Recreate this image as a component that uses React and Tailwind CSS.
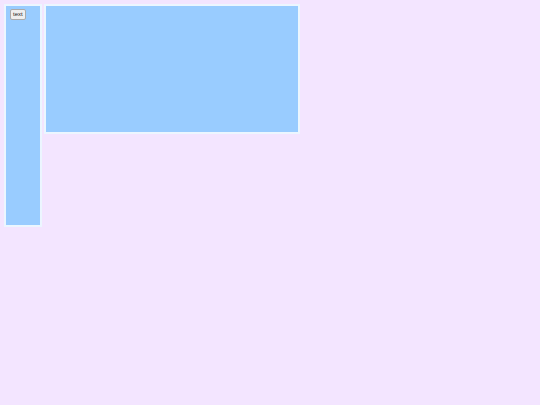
export default function App() {
  return (
    <div className="w-[540px] h-[405px] bg-[#f3e5ff] p-[4px] flex items-start gap-[2px]" style={{fontFamily: '"Liberation Sans", Arial, sans-serif'}}>
      <div className="w-[38px] h-[223px] bg-[#99ccff] border-2 border-[#ecf6ff] pt-[3px] pl-[4px]">
        <button className="block text-[6px] leading-[7px] px-[2px] py-[1px] bg-[#efefef] border border-[#aaa] rounded-[2px] text-[#222]">text</button>
      </div>
      <div className="w-[256px] h-[130px] bg-[#99ccff] border-2 border-[#ecf6ff]"></div>
    </div>
  );
}
